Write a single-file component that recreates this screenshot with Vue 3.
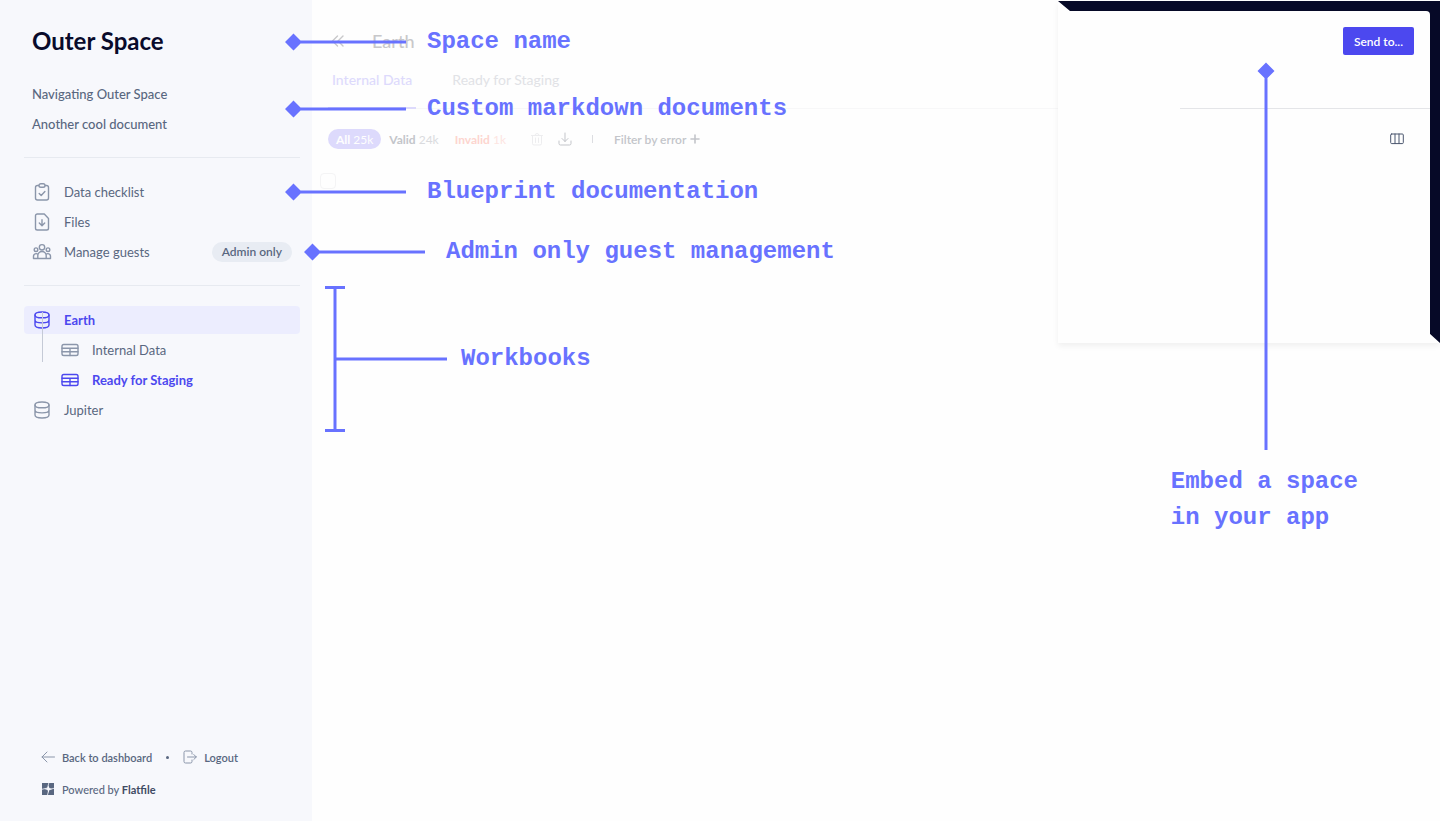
<script setup>
const documents = ['Navigating Outer Space', 'Another cool document']
const notes = [
  { id: 'space', text: 'Space name' },
  { id: 'markdown', text: 'Custom markdown documents' },
  { id: 'blueprint', text: 'Blueprint documentation' },
  { id: 'guests', text: 'Admin only guest management' },
]
</script>

<template>
  <div class="page">
    <aside class="sidebar">
      <h1>Outer Space</h1>
      <nav class="group" aria-label="Documents">
        <a v-for="doc in documents" :key="doc" href="#" class="row doc">{{ doc }}</a>
      </nav>
      <hr />
      <nav class="group" aria-label="Space">
        <a href="#" class="row">
          <svg class="icon" viewBox="0 0 20 20"><rect x="3.5" y="3.5" width="13" height="14.5" rx="2" /><rect x="7" y="1.7" width="6" height="3.6" rx="1.8" fill="#f7f8fc" /><path d="M7.2 11.6l2 2 3.7-4" /></svg>
          Data checklist
        </a>
        <a href="#" class="row">
          <svg class="icon" viewBox="0 0 20 20"><path d="M12.3 2H5.3a1.8 1.8 0 0 0-1.8 1.8v12.4A1.8 1.8 0 0 0 5.3 18h9.4a1.8 1.8 0 0 0 1.800-1.800V6.400zM10 7.800v5.700M7.300 11l2.700 2.700 2.700-2.700" /></svg>
          Files
        </a>
        <a href="#" class="row">
          <svg class="icon" viewBox="0 0 20 20"><circle cx="10" cy="5.3" r="2.7" /><circle cx="4" cy="7.7" r="1.8" /><circle cx="16" cy="7.7" r="1.8" /><path d="M5.8 16.5v-2.800a4.200 4.200 0 0 1 8.400 0v2.800zM5.800 16.500H1.500v-2.200a2.600 2.600 0 0 1 4.500-1.800M14.200 16.500h4.300v-2.200a2.600 2.600 0 0 0-4.500-1.800" /></svg>
          Manage guests
          <span class="badge">Admin only</span>
        </a>
      </nav>
      <hr />
      <nav class="group tree" aria-label="Workbooks">
        <a href="#" class="row current">
          <svg class="icon" viewBox="0 0 20 20"><ellipse cx="10" cy="4.9" rx="7" ry="2.900" /><path d="M3 4.900v10.200C3 16.700 6.100 18 10 18s7-1.300 7-2.900V4.900M3 10c0 1.600 3.100 2.900 7 2.900s7-1.300 7-2.900" /></svg>
          Earth
        </a>
        <a href="#" class="row child">
          <svg class="icon" viewBox="0 0 20 20"><rect x="2" y="4.5" width="16" height="11" rx="1.8" /><path d="M2 8.2h16M2 11.8h16M10 8.2v7.3" /></svg>
          Internal Data
        </a>
        <a href="#" class="row child active">
          <svg class="icon" viewBox="0 0 20 20"><rect x="2" y="4.5" width="16" height="11" rx="1.8" /><path d="M2 8.2h16M2 11.8h16M10 8.2v7.3" /></svg>
          Ready for Staging
        </a>
        <a href="#" class="row">
          <svg class="icon" viewBox="0 0 20 20"><ellipse cx="10" cy="4.9" rx="7" ry="2.900" /><path d="M3 4.900v10.200C3 16.700 6.100 18 10 18s7-1.300 7-2.900V4.900M3 10c0 1.600 3.100 2.900 7 2.900s7-1.300 7-2.900" /></svg>
          Jupiter
        </a>
      </nav>
      <footer class="foot">
        <div class="foot-row">
          <a href="#" class="foot-link">
            <svg class="small" viewBox="0 0 14 14"><path d="M13.5 7H1M6 2L1 7l5 5" /></svg>
            Back to dashboard
          </a>
          <span class="dot"></span>
          <a href="#" class="foot-link">
            <svg class="small" viewBox="0 0 14 14"><path d="M9 4V2.500A1.500 1.500 0 0 0 7.500 1H2.500A1.500 1.500 0 0 0 1 2.500v9A1.500 1.500 0 0 0 2.500 13h5A1.500 1.500 0 0 0 9 11.500V10M4.500 7h8.800M10.800 4.500L13.300 7l-2.500 2.500" /></svg>
            Logout
          </a>
        </div>
        <div class="foot-link">
          <svg class="small" viewBox="0 0 14 14"><rect x="1" y="1" width="12" height="12" fill="#596780" stroke="none" /><path d="M7.800 1L6.500 6 1 7.300M13 6.300L7.800 7.700 6.500 13" stroke="#f7f8fc" stroke-width=".8" /><path d="M7.500 3.200l.9 2.900 2.900.9-2.900 1-.9 2.900-1-2.900L3.300 7l3.200-.9z" fill="#f7f8fc" stroke="none" /></svg>
          <span>Powered by <b>Flatfile</b></span>
        </div>
      </footer>
    </aside>

    <main class="main">
      <header class="crumb">
        <button class="plain collapse" aria-label="Collapse sidebar">
          <svg class="chev" viewBox="0 0 14 14"><path d="M6.500 2L1.500 7l5 5M12 2L7 7l5 5" /></svg>
        </button>
        <h2>Earth</h2>
      </header>
      <nav class="tabs" aria-label="Sheets">
        <a href="#" class="tab selected">Internal Data</a>
        <a href="#" class="tab">Ready for Staging</a>
      </nav>
      <div class="tools">
        <button class="plain pill all"><b>All</b> 25k</button>
        <button class="plain pill"><b>Valid</b> <span class="pale">24k</span></button>
        <button class="plain pill bad"><b>Invalid</b> <span class="pale">1k</span></button>
        <button class="plain tool trash" aria-label="Delete">
          <svg class="small" viewBox="0 0 14 14"><path d="M1.500 3.500h11M2.500 3.500v8a1.500 1.500 0 0 0 1.500 1.500h6a1.500 1.500 0 0 0 1.500-1.500v-8M5 3.500a2 2 0 0 1 4 0M5.500 6v4.500M8.500 6v4.500" /></svg>
        </button>
        <button class="plain tool" aria-label="Download">
          <svg class="small" viewBox="0 0 14 14"><path d="M1 9v2.500A1.500 1.500 0 0 0 2.500 13h9a1.500 1.500 0 0 0 1.500-1.500V9M7 1v8.500M4 6.500l3 3 3-3" /></svg>
        </button>
        <span class="divider"></span>
        <button class="plain filter">
          Filter by error
          <svg class="plus" viewBox="0 0 10 10"><path d="M5 1v8M1 5h8" /></svg>
        </button>
      </div>
      <input class="check" type="checkbox" aria-label="Select all rows" />
    </main>

    <section class="embed" aria-label="Embedded app">
      <div class="wedge"></div>
      <div class="card">
        <div class="card-head"><button class="send">Send to...</button></div>
        <div class="card-tools">
          <button class="plain" aria-label="Columns">
            <svg class="cols" viewBox="0 0 14 12"><rect x=".7" y="1" width="12.600" height="9.600" rx="1" /><path d="M5 1v9.600M9 1v9.600" /></svg>
          </button>
        </div>
      </div>
    </section>

    <div v-for="note in notes" :key="note.id" class="note" :class="note.id">
      <svg class="pin" viewBox="0 0 121 18"><path d="M0 9l8.500-8.500L17 9l-8.500 8.500zM8 7.500h113v3H8z" /></svg>
      <span>{{ note.text }}</span>
    </div>
    <div class="note workbooks">
      <svg class="bracket" viewBox="0 0 122 146"><path d="M0 0h20v3h-8.500v68.500H122v3H11.500V143H20v3H0v-3h8.500V3H0z" /></svg>
      <span>Workbooks</span>
    </div>
    <div class="note embedding">
      <svg class="stem" viewBox="0 0 18 388"><path d="M9 .5L17.500 9 9 17.500.5 9zM7.500 9h3v379h-3z" /></svg>
      <span>Embed a space<br />in your app</span>
    </div>
  </div>
</template>

<style>
body {
  background: #fefefe;
}
</style>

<style scoped>
.page {
  position: relative;
  display: flex;
  min-height: 100vh;
  overflow: hidden;
  font-family: Lato, "Open Sans", sans-serif;
  font-size: 13px;
  color: #596780;
}
.page * {
  box-sizing: border-box;
}
a {
  color: inherit;
  text-decoration: none;
}
svg {
  flex: none;
  fill: none;
  stroke: currentColor;
  stroke-linecap: round;
  stroke-linejoin: round;
}
.plain {
  display: flex;
  align-items: center;
  padding: 0;
  border: 0;
  background: none;
  font: inherit;
  color: inherit;
}
.sidebar {
  display: flex;
  flex: none;
  flex-direction: column;
  width: 312px;
  padding: 24px 12px 20px 24px;
  background: #f7f8fc;
}
h1 {
  margin: 0 8px 22px;
  font-size: 24px;
  line-height: 34px;
  font-weight: 700;
  color: #090b2b;
}
.group {
  display: flex;
  flex-direction: column;
  gap: 2px;
}
hr {
  width: 100%;
  height: 1px;
  margin: 19px 0 20px;
  border: 0;
  background: #e7eaf0;
}
.row {
  display: flex;
  align-items: center;
  gap: 12px;
  height: 28px;
  padding: 0 8px;
  border-radius: 4px;
}
.doc {
  font-weight: 500;
}
.icon {
  width: 20px;
  height: 20px;
  color: #8b96aa;
  stroke-width: 1.4;
}
.badge {
  margin-left: auto;
  padding: 0 10px;
  border-radius: 10px;
  background: #e8ecf3;
  font-size: 12px;
  line-height: 20px;
  font-weight: 600;
}
.tree {
  position: relative;
}
.tree::before {
  content: "";
  position: absolute;
  z-index: 1;
  left: 18px;
  top: 6px;
  width: 1px;
  height: 50px;
  background: #c5cad6;
}
.child {
  padding-left: 36px;
}
.current {
  background: #ecedfe;
}
.current,
.active {
  font-weight: 700;
  color: #4c48ef;
}
.current .icon,
.active .icon {
  color: #4c48ef;
}
.foot {
  display: flex;
  flex-direction: column;
  gap: 8px;
  margin-top: auto;
  padding-left: 17px;
  font-size: 11px;
}
.foot-row,
.foot-link {
  display: flex;
  align-items: center;
  height: 24px;
}
.foot-link {
  gap: 7px;
  font-weight: 500;
}
.foot-row .foot-link {
  font-weight: 600;
}
.foot b {
  font-weight: 700;
  color: #3f4b63;
}
.small {
  width: 14px;
  height: 14px;
  stroke-width: 1;
}
.foot-row .small {
  color: #8b96aa;
}
.dot {
  width: 3px;
  height: 3px;
  margin: 0 14px;
  border-radius: 50%;
  background: #596780;
}
.main {
  flex: 1;
  min-width: 0;
  padding-top: 24px;
}
.crumb {
  display: flex;
  align-items: center;
  gap: 27px;
  height: 34px;
  padding-left: 19px;
  color: #c8c8ca;
}
.chev {
  width: 14px;
  height: 14px;
  stroke-width: 1.4;
}
h2 {
  margin: 0;
  font-size: 18px;
  font-weight: 500;
}
.tabs {
  display: flex;
  gap: 32px;
  height: 51px;
  padding-left: 16px;
  border-bottom: 1px solid #f7f7f8;
  font-size: 14px;
  line-height: 44px;
  color: #e1e2e6;
}
.tab {
  height: 51px;
  padding: 0 4px;
}
.selected {
  border-bottom: 2px solid #dddafc;
  color: #dddafc;
  font-weight: 500;
}
.tools {
  display: flex;
  align-items: center;
  height: 60px;
  padding-left: 16px;
  font-size: 12px;
  color: #c3c5ca;
}
.pill {
  gap: 3px;
  height: 20px;
  padding: 0 8px;
  border-radius: 10px;
}
.all {
  background: #dddafc;
  color: #fefefe;
}
.bad {
  color: #fdd5cf;
}
.pale {
  opacity: 0.6;
}
.tool {
  margin-left: 14px;
}
.trash {
  margin-left: 16px;
  color: #ededef;
}
.divider {
  width: 1px;
  height: 8px;
  margin: 0 21px 0 20px;
  background: #dcdde1;
}
.filter {
  gap: 4px;
  font-weight: 600;
}
.plus {
  width: 10px;
  height: 10px;
  stroke-width: 1.6;
}
.check {
  display: block;
  appearance: none;
  width: 16px;
  height: 16px;
  margin: 4px 8px;
  border: 1px solid #f4f4f5;
  border-radius: 4px;
}
.embed {
  position: absolute;
  top: 1px;
  right: 0;
  width: 382px;
  height: 342px;
  background: #fefefe;
  box-shadow: 0 3px 6px rgba(0, 0, 0, 0.06);
}
.wedge {
  position: absolute;
  inset: 0;
  background: #060927;
  clip-path: polygon(0 0, 100% 0, 100% 100%, calc(100% - 11px) calc(100% - 10px), 12px 10px);
}
.card {
  position: relative;
  height: 332px;
  margin: 10px 10px 0 0;
  border-radius: 0 4px 0 0;
  background: #fefefe;
}
.card-head {
  display: flex;
  justify-content: flex-end;
  height: 98px;
  margin-left: 122px;
  padding: 16px 16px 0;
  border-bottom: 1px solid #e4e5e8;
}
.send {
  height: 28px;
  padding: 0 11px;
  border: 0;
  border-radius: 2px;
  background: #4c48ef;
  font: 600 12px Lato, sans-serif;
  color: #fff;
}
.card-tools {
  display: flex;
  justify-content: flex-end;
  align-items: center;
  height: 60px;
  padding-right: 26px;
  color: #4a566e;
}
.cols {
  width: 14px;
  height: 12px;
}
.note {
  position: absolute;
  z-index: 2;
  left: 285px;
  display: flex;
  align-items: center;
  gap: 21px;
  font: 700 24px/36px "Liberation Mono", monospace;
  color: #6872ff;
  white-space: nowrap;
}
.note svg {
  fill: currentColor;
  stroke: none;
}
.pin {
  width: 121px;
  height: 18px;
}
.space {
  top: 24px;
}
.markdown {
  top: 91px;
}
.blueprint {
  top: 174px;
}
.guests {
  top: 234px;
  left: 304px;
}
.workbooks {
  top: 286px;
  left: 325px;
  gap: 14px;
}
.bracket {
  width: 122px;
  height: 146px;
}
.embedding {
  top: 62px;
  left: auto;
  right: 82px;
  flex-direction: column;
  align-items: flex-start;
  gap: 14px;
}
.stem {
  width: 18px;
  height: 388px;
  margin-left: 86px;
}
</style>
